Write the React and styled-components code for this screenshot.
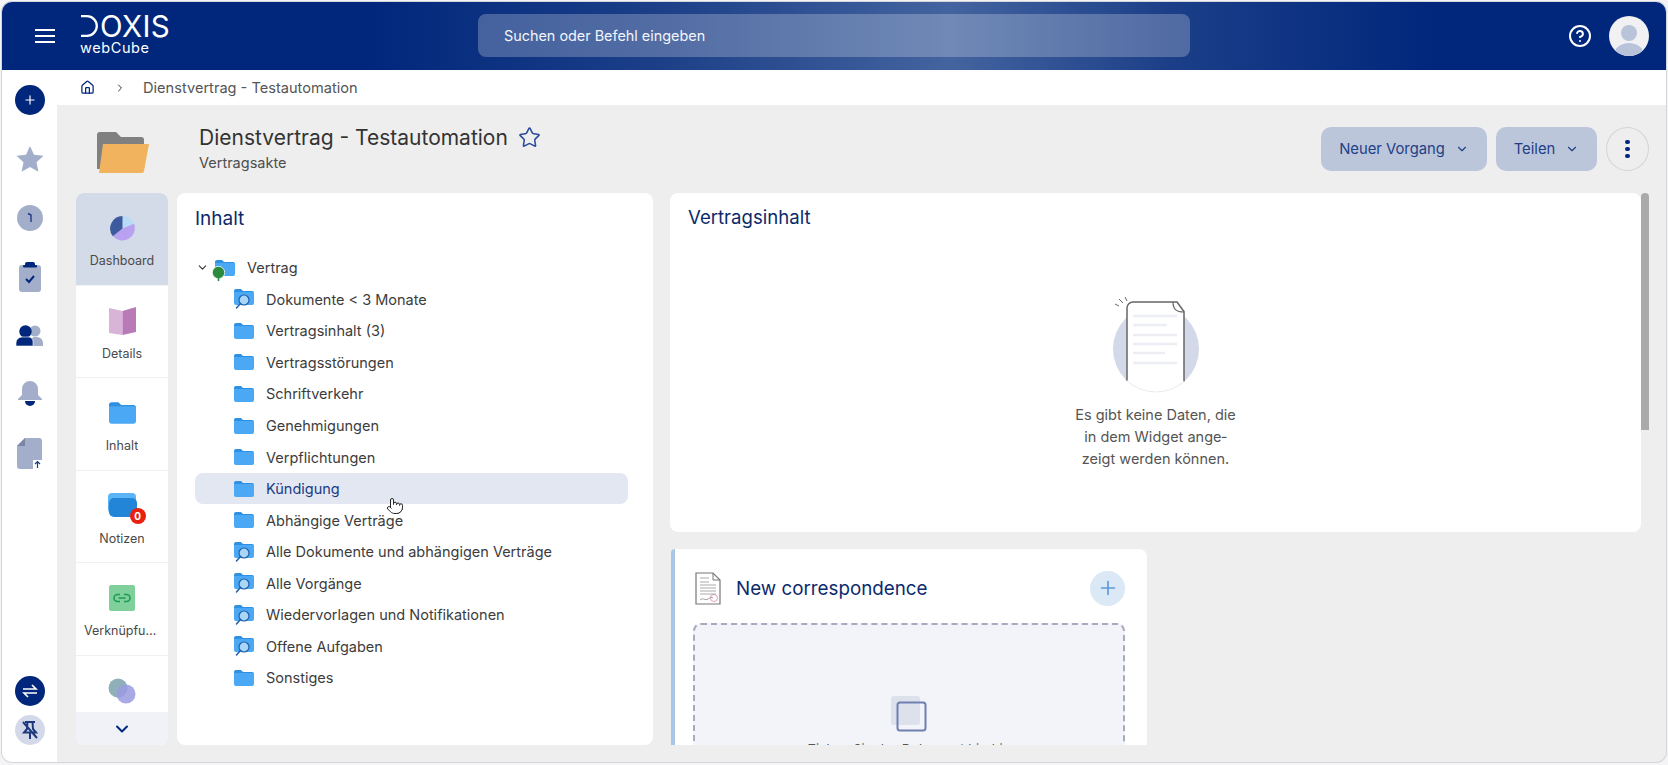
import React from 'react';
import styled, { createGlobalStyle } from 'styled-components';
import { ChevronDown, ChevronRight, Star, Plus, Home, HelpCircle, Pointer } from 'lucide-react';

const Global = createGlobalStyle`
  html, body { margin: 0; padding: 0; height: 100%; background: #f4f4f6; }
  body { font-family: Inter, "Noto Sans", "Liberation Sans", sans-serif; overflow: hidden; }
  #root { height: 100%; }
  * { box-sizing: border-box; }
`;

const Frame = styled.div`
  position: absolute; inset: 2px 2px 3px 2px;
  display: flex; flex-direction: column;
  border-radius: 10px; overflow: hidden;
  background: #eeeeee;
  box-shadow: 0 0 0 1px #d4d6dc;
`;
const Header = styled.header`
  height: 68px; flex: none;
  display: flex; align-items: center;
  padding: 0 17px 0 33px;
  background: linear-gradient(90deg, #00277c 0%, #00277c 22%, #1d4088 40%, #44649f 57%, #1c3f88 70%, #00277c 86%, #00277c 100%);
  color: #fff;
`;
const Burger = styled.svg`
  width: 20px; height: 14px; flex: none;
`;
const Logo = styled.div`
  margin-left: 25px; width: 398px; flex: none;
  display: flex; flex-direction: column;
  margin-top: -3px;
`;
const LogoMark = styled.div`
  display: flex; align-items: center; height: 24px;
  font-size: 29.5px; font-weight: 400; line-height: 24px; letter-spacing: 0.4px;
  svg { margin-right: 2px; }
`;
const LogoSub = styled.div`
  font-size: 14.5px; font-weight: 400; line-height: 16px; letter-spacing: 0.6px; margin-top: 2px;
`;
const Search = styled.div`
  width: 712px; height: 43px; flex: none; margin-top: -2px;
  display: flex; align-items: center; padding-left: 26px;
  border-radius: 8px;
  background: rgba(255,255,255,0.24);
  font-size: 14.4px; color: #f2f5fb;
`;
const HeaderRight = styled.div`
  margin-left: auto; display: flex; align-items: center; gap: 17px;
`;
const Avatar = styled.div`
  width: 40px; height: 40px; border-radius: 50%; overflow: hidden; flex: none; background: #f1f1f3;
  svg { display: block; }
`;
const Shell = styled.div`
  flex: 1; min-height: 0; display: flex;
`;
const Rail = styled.nav`
  width: 55px; flex: none; background: #fff;
  display: flex; flex-direction: column; align-items: center;
  padding-bottom: 17px;
`;
const RailItem = styled.div`
  height: 59px; width: 100%; flex: none;
  display: flex; align-items: center; justify-content: center;
`;
const RailBottom = styled.div`
  margin-top: auto; display: flex; flex-direction: column; gap: 9px;
`;
const Round = styled.div`
  width: ${p => p.$size || 30}px; height: ${p => p.$size || 30}px; border-radius: 50%;
  display: flex; align-items: center; justify-content: center;
  background: ${p => p.$bg || '#00277c'}; color: ${p => p.$color || '#fff'};
`;
const Main = styled.main`
  flex: 1; min-width: 0; display: flex; flex-direction: column;
`;
const Crumbs = styled.div`
  height: 35px; flex: none; background: #fff;
  display: flex; align-items: center; padding-left: 23px;
  font-size: 14.6px; color: #555;
`;
const CrumbSep = styled.span`
  display: flex; width: 48px; padding-left: 19px; color: #333;
`;
const TitleBar = styled.div`
  height: 88px; flex: none; display: flex; align-items: flex-start;
  padding: 22px 17px 0 40px;
`;
const BigFolder = styled.svg`
  width: 52px; height: 42px; flex: none; margin-top: 4px;
`;
const TitleBlock = styled.div`
  margin-left: 50px; display: flex; flex-direction: column;
`;
const TitleLine = styled.div`
  display: flex; align-items: center; gap: 10px; height: 24px;
  font-size: 21px; font-weight: 400; color: #333;
  margin-top: -2px;
`;
const Subtitle = styled.div`
  font-size: 14.5px; color: #4d4d4d; margin-top: 5px; line-height: 18px;
`;
const Actions = styled.div`
  margin-left: auto; display: flex; gap: 9px; align-items: center;
`;
const ActionBtn = styled.button`
  width: ${p => p.$w}px; height: 44px; border: 0; border-radius: 10px;
  background: #bcc6da; color: #1f3f86; font: inherit; font-size: 14.8px;
  display: flex; align-items: center; justify-content: center; gap: 10px;
`;
const Kebab = styled.button`
  width: 43px; height: 44px; border-radius: 50%; border: 1px solid #d4d4d4; background: transparent;
  display: flex; flex-direction: column; gap: 2.5px; align-items: center; justify-content: center; padding: 0;
  i { width: 4.5px; height: 4.5px; border-radius: 50%; background: #00277c; display: block; }
`;
const Body = styled.div`
  flex: 1; min-height: 0; display: flex; padding: 0 17px 17px 19px;
`;
const Tabs = styled.div`
  width: 92px; flex: none; display: flex; flex-direction: column; border-radius: 8px; overflow: hidden; background: #fff;
`;
const TabList = styled.div`
  flex: 1; min-height: 0; overflow: hidden;
`;
const Tab = styled.div`
  height: 92.5px; display: flex; flex-direction: column; align-items: center;
  padding-top: 19px;
  background: ${p => p.$active ? '#d3dae8' : '#fff'};
  border-bottom: 1px solid #f1f1f1;
  position: relative;
`;
const TabIcon = styled.div`
  height: 32px; display: flex; align-items: center; justify-content: center; position: relative;
`;
const TabLabel = styled.div`
  margin-top: 8px; font-size: 12.5px; color: #4a4a4a; line-height: 18px;
  max-width: 76px; white-space: nowrap; overflow: hidden; text-overflow: ellipsis;
`;
const Badge = styled.span`
  position: absolute; right: -9px; bottom: -2px; width: 16px; height: 16px; border-radius: 50%;
  background: #e8200f; color: #fff; font-size: 10px; font-weight: 700; display: flex; align-items: center; justify-content: center;
`;
const TabMore = styled.div`
  height: 33px; flex: none; background: #f0f2f8; display: flex; align-items: center; justify-content: center; color: #00277c;
`;
const Panel = styled.section`
  width: 476px; flex: none; margin-left: 9px; background: #fff; border-radius: 8px;
  padding: 14px 25px 0 18px; position: relative;
`;
const PanelTitle = styled.h2`
  margin: 0; font-size: 19px; font-weight: 400; color: #0b2a6b; line-height: 24px;
`;
const Tree = styled.div`
  margin-top: 21px;
`;
const Row = styled.div`
  height: 31.55px; display: flex; align-items: center; border-radius: 8px;
  padding-left: ${p => p.$root ? 1 : 39}px;
  background: ${p => p.$active ? '#e3e7f1' : 'transparent'};
  color: ${p => p.$active ? '#1a3a86' : '#3c3c3c'};
  font-size: 14.5px; white-space: nowrap;
`;
const RowText = styled.span`
  margin-left: 12px;
`;
const RootIcon = styled.span`
  position: relative; display: flex; margin-left: 6px;
`;
const PinMark = styled.svg`
  position: absolute; left: -3px; top: 6px;
`;
const Cursor = styled.div`
  position: absolute; left: 209px; top: 304px; color: #222;
`;
const Column = styled.div`
  width: 971px; flex: none; margin-left: 17px; display: flex; flex-direction: column; gap: 17px; overflow: hidden;
`;
const ContentCard = styled.section`
  height: 339px; flex: none; background: #fff; border-radius: 8px; padding: 12px 18px; display: flex; flex-direction: column; align-items: center;
`;
const CardTitle = styled.h2`
  align-self: flex-start; margin: 0; font-size: 18.6px; font-weight: 400; color: #0b2a6b; line-height: 24px;
`;
const EmptyArt = styled.svg`
  width: 100px; height: 100px; margin-top: 65px; flex: none; display: block;
`;
const EmptyText = styled.p`
  margin: 10px 0 0; font-size: 14.5px; line-height: 22px; color: #555; text-align: center; width: 165px;
`;
const Correspondence = styled.section`
  width: 476px; flex: none; height: 240px; margin-left: 1px; background: #fff; border-radius: 4px 8px 0 0;
  border-left: 4px solid #a9c6e8; padding: 21px 22px 0 20px;
`;
const CorrHead = styled.div`
  display: flex; align-items: center; height: 36px;
`;
const CorrTitle = styled.h3`
  margin: 0 0 0 15px; font-size: 18.8px; font-weight: 400; color: #0b2a6b; white-space: nowrap;
`;
const AddBtn = styled.div`
  margin-left: auto; width: 35px; height: 35px; border-radius: 50%; background: #dbe8f5; color: #5a9ad8;
  display: flex; align-items: center; justify-content: center;
`;
const Drop = styled.div`
  margin: 17px 0 0 -2px; height: 200px; border: 2px dashed #a9a9c0; border-radius: 8px; background: #f2f4f9;
  display: flex; flex-direction: column; align-items: center; padding-top: 71px;
`;
const DropIcon = styled.svg`
  width: 36px; height: 36px; flex: none;
`;
const DropText = styled.div`
  margin-top: 9px; font-size: 13px; color: #555;
`;
const Scrollbar = styled.div`
  width: 8px; flex: none; height: 237px; background: #aaaaaa; border-radius: 4px 4px 0 0;
`;

const Folder = () => (
  <svg width="20" height="16" viewBox="0 0 20 16">
    <path d="M0 2a2 2 0 0 1 2-2h5l2 2h9a2 2 0 0 1 2 2v2H0z" fill="#2f8fe0" />
    <path d="M0 3h20v11a2 2 0 0 1-2 2H2a2 2 0 0 1-2-2z" fill="#4aa8f5" />
  </svg>
);
const SearchFolder = () => (
  <svg width="20" height="20" viewBox="0 0 20 20">
    <path d="M0 2a2 2 0 0 1 2-2h5l2 2h9a2 2 0 0 1 2 2v2H0z" fill="#2f8fe0" />
    <path d="M0 3h20v11a2 2 0 0 1-2 2H2a2 2 0 0 1-2-2z" fill="#4aa8f5" />
    <circle cx="10" cy="11" r="5" fill="#a9d6f8" stroke="#1f5fa8" strokeWidth="1.2" />
    <path d="M6.5 14.5 2.5 19" stroke="#1f5fa8" strokeWidth="1.5" strokeLinecap="round" />
  </svg>
);

const items = [
  ['Dokumente < 3 Monate', 1], ['Vertragsinhalt (3)', 0], ['Vertragsstörungen', 0], ['Schriftverkehr', 0],
  ['Genehmigungen', 0], ['Verpflichtungen', 0], ['Kündigung', 0], ['Abhängige Verträge', 0],
  ['Alle Dokumente und abhängigen Verträge', 1], ['Alle Vorgänge', 1], ['Wiedervorlagen und Notifikationen', 1],
  ['Offene Aufgaben', 1], ['Sonstiges', 0],
];

export default function App() {
  return (
    <>
      <Global />
      <Frame>
        <Header>
          <Burger viewBox="0 0 20 14"><path d="M0 1h20M0 7h20M0 13h20" stroke="#fff" strokeWidth="2" /></Burger>
          <Logo>
            <LogoMark>
              <svg width="18" height="22" viewBox="0 0 18 22"><path d="M1 1.2h6a9.8 9.8 0 0 1 0 19.6H1" fill="none" stroke="#fff" strokeWidth="2.3" /></svg>
              OXIS
            </LogoMark>
            <LogoSub>webCube</LogoSub>
          </Logo>
          <Search>Suchen oder Befehl eingeben</Search>
          <HeaderRight>
            <HelpCircle size={24} color="#fff" strokeWidth={2} />
            <Avatar>
              <svg width="40" height="40" viewBox="0 0 40 40">
                <circle cx="20" cy="17" r="8" fill="#b9c3da" />
                <ellipse cx="20" cy="39" rx="15" ry="12" fill="#b9c3da" />
              </svg>
            </Avatar>
          </HeaderRight>
        </Header>
        <Shell>
          <Rail>
            <RailItem><Round><Plus size={14} strokeWidth={2} /></Round></RailItem>
            <RailItem>
              <svg width="30" height="30" viewBox="0 0 24 24"><path d="M12 1.5l3.2 7 7.6.9-5.6 5.2 1.5 7.5L12 18.3l-6.7 3.8 1.5-7.5L1.2 9.4l7.6-.9z" fill="#a3aeca" /></svg>
            </RailItem>
            <RailItem>
              <Round $size={26} $bg="#a3aeca" $color="#00277c">
                <svg width="10" height="14" viewBox="0 0 10 14"><path d="M3 2.5 6 4v7" fill="none" stroke="#1d3a80" strokeWidth="1.4" /></svg>
              </Round>
            </RailItem>
            <RailItem>
              <svg width="24" height="32" viewBox="0 0 24 32">
                <rect x="1" y="4" width="22" height="27" rx="3" fill="#a3aeca" />
                <path d="M7 6V3a2 2 0 0 1 2-2h6a2 2 0 0 1 2 2v3z" fill="#00277c" />
                <rect x="5" y="4" width="14" height="2.5" fill="#00277c" rx="1" />
                <path d="M8 18l3 3 5-6" fill="none" stroke="#00277c" strokeWidth="2" />
              </svg>
            </RailItem>
            <RailItem>
              <svg width="28" height="22" viewBox="0 0 28 22">
                <circle cx="19" cy="6" r="5.5" fill="#a3aeca" />
                <path d="M14 21v-4a5 5 0 0 1 5-5h2a6 6 0 0 1 6 6v3z" fill="#a3aeca" />
                <circle cx="9.5" cy="6.5" r="6.2" fill="#00277c" />
                <path d="M0 21v-3a6 6 0 0 1 6-6h7a5 5 0 0 1 4 5v4z" fill="#00277c" stroke="#fff" strokeWidth="0.6" />
              </svg>
            </RailItem>
            <RailItem>
              <svg width="24" height="30" viewBox="0 0 24 30">
                <path d="M12 1a8 8 0 0 0-8 8v6l-4 4v1h24v-1l-4-4V9a8 8 0 0 0-8-8z" fill="#a3aeca" />
                <path d="M7 21h10a5 5 0 0 1-10 0z" fill="#00277c" />
              </svg>
            </RailItem>
            <RailItem>
              <svg width="25" height="31" viewBox="0 0 25 31">
                <path d="M8 0h14a3 3 0 0 1 3 3v25a3 3 0 0 1-3 3H3a3 3 0 0 1-3-3V8z" fill="#a3aeca" />
                <path d="M8 0v8H0z" fill="#7a86a6" />
                <rect x="16" y="22" width="9" height="9" fill="#fff" />
                <path d="M20.5 30v-6M18 26l2.5-2.5L23 26" stroke="#1d3a80" strokeWidth="1.2" fill="none" />
              </svg>
            </RailItem>
            <RailBottom>
              <Round>
                <svg width="16" height="14" viewBox="0 0 16 14"><path d="M1 5h13l-4-4M15 9H2l4 4" fill="none" stroke="#fff" strokeWidth="1.7" /></svg>
              </Round>
              <Round $bg="#d3d9e8">
                <svg width="18" height="20" viewBox="0 0 18 20">
                  <path d="M4 2h10M6.5 2 6 9l-3 3.5h12L12 9l-.5-7M9 12.5V19M2 2l14 16" fill="none" stroke="#1d3a80" strokeWidth="2" />
                </svg>
              </Round>
            </RailBottom>
          </Rail>
          <Main>
            <Crumbs>
              <Home size={15} color="#00277c" strokeWidth={2} />
              <CrumbSep><ChevronRight size={12} /></CrumbSep>
              Dienstvertrag - Testautomation
            </Crumbs>
            <TitleBar>
              <BigFolder viewBox="0 0 52 42">
                <path d="M0 4a3 3 0 0 1 3-3h16l5 5h21a3 3 0 0 1 2 2v30H0z" fill="#808080" />
                <path d="M6 13h46l-5 27a2 2 0 0 1-2 2H2z" fill="#f2b35f" />
              </BigFolder>
              <TitleBlock>
                <TitleLine>
                  Dienstvertrag - Testautomation
                  <Star size={23} color="#2a4a9a" strokeWidth={1.6} />
                </TitleLine>
                <Subtitle>Vertragsakte</Subtitle>
              </TitleBlock>
              <Actions>
                <ActionBtn $w={166}>Neuer Vorgang <ChevronDown size={14} /></ActionBtn>
                <ActionBtn $w={101}>Teilen <ChevronDown size={14} /></ActionBtn>
                <Kebab aria-label="Mehr"><i /><i /><i /></Kebab>
              </Actions>
            </TitleBar>
            <Body>
              <Tabs>
                <TabList>
                  <Tab $active>
                    <TabIcon>
                      <svg width="27" height="27" viewBox="0 0 28 28">
                        <path d="M14 14V1a13 13 0 0 1 12 8z" fill="#b8dcf8" />
                        <path d="M14 14l12-5a13 13 0 0 1-22 13z" fill="#b9a0f0" />
                        <path d="M14 14V1A13 13 0 0 0 4 22z" fill="#3d5a9e" />
                      </svg>
                    </TabIcon>
                    <TabLabel>Dashboard</TabLabel>
                  </Tab>
                  <Tab>
                    <TabIcon>
                      <svg width="27" height="28" viewBox="0 0 27 28">
                        <path d="M0 1l13.5 3v24L0 26z" fill="#d8b4d8" />
                        <path d="M27 0l-13.5 4v24L27 25z" fill="#b87bb8" />
                      </svg>
                    </TabIcon>
                    <TabLabel>Details</TabLabel>
                  </Tab>
                  <Tab>
                    <TabIcon>
                      <svg width="27" height="22" viewBox="0 0 20 16">
                        <path d="M0 2a2 2 0 0 1 2-2h5l2 2h9a2 2 0 0 1 2 2v2H0z" fill="#2f8fe0" />
                        <path d="M0 3h20v11a2 2 0 0 1-2 2H2a2 2 0 0 1-2-2z" fill="#4aa8f5" />
                      </svg>
                    </TabIcon>
                    <TabLabel>Inhalt</TabLabel>
                  </Tab>
                  <Tab>
                    <TabIcon>
                      <svg width="29" height="26" viewBox="0 0 29 26">
                        <rect x="0" y="0" width="28" height="20" rx="4" fill="#5ab4f5" />
                        <rect x="1" y="5" width="28" height="19" rx="5" fill="#2285d8" />
                      </svg>
                      <Badge>0</Badge>
                    </TabIcon>
                    <TabLabel>Notizen</TabLabel>
                  </Tab>
                  <Tab>
                    <TabIcon>
                      <svg width="26" height="26" viewBox="0 0 26 26">
                        <rect width="26" height="26" rx="2" fill="#7fd09a" />
                        <path d="M11 9.5H8.5a3.5 3.5 0 0 0 0 7H11M15 9.5h2.5a3.5 3.5 0 0 1 0 7H15M9.5 13h7" fill="none" stroke="#1f9a55" strokeWidth="1.6" />
                      </svg>
                    </TabIcon>
                    <TabLabel>Verknüpfungen</TabLabel>
                  </Tab>
                  <Tab>
                    <TabIcon>
                      <svg width="28" height="26" viewBox="0 0 28 26">
                        <circle cx="10" cy="10" r="9.5" fill="#8fb0b8" />
                        <circle cx="18" cy="16" r="9.5" fill="#9a9ae0" fillOpacity="0.85" />
                      </svg>
                    </TabIcon>
                  </Tab>
                </TabList>
                <TabMore><ChevronDown size={20} strokeWidth={2.4} /></TabMore>
              </Tabs>
              <Panel>
                <PanelTitle>Inhalt</PanelTitle>
                <Tree>
                  <Row $root>
                    <ChevronDown size={13} color="#333" strokeWidth={2} />
                    <RootIcon>
                      <Folder />
                      <PinMark width="13" height="15" viewBox="0 0 13 15">
                        <circle cx="6.5" cy="6.5" r="6.2" fill="#2b8a3e" stroke="#fff" strokeWidth="0.8" />
                        <path d="M6.5 11v4" stroke="#2b8a3e" strokeWidth="1.6" />
                      </PinMark>
                    </RootIcon>
                    <RowText>Vertrag</RowText>
                  </Row>
                  {items.map(([label, search]) => (
                    <Row key={label} $active={label === 'Kündigung'}>
                      {search ? <SearchFolder /> : <Folder />}
                      <RowText>{label}</RowText>
                    </Row>
                  ))}
                </Tree>
                <Cursor><Pointer size={18} fill="#fff" strokeWidth={1.3} /></Cursor>
              </Panel>
              <Column>
                <ContentCard>
                  <CardTitle>Vertragsinhalt</CardTitle>
                  <EmptyArt viewBox="0 0 100 100">
                    <circle cx="50" cy="55" r="43" fill="#d3d9e8" />
                    <path d="M21 86.7V14a6 6 0 0 1 6-6h44l7 9v70.6A43 43 0 0 1 21 86.7z" fill="#fff" />
                    <path d="M21 86.7V14a6 6 0 0 1 6-6h44c3 4 5 7 7 9.5v70" fill="none" stroke="#666" strokeWidth="1.5" />
                    <path d="M21 86.7A43 43 0 0 0 78 87.6" fill="none" stroke="#e6e8ee" strokeWidth="0.8" />
                    <path d="M67 8c0 7 3 10 11 10" fill="none" stroke="#666" strokeWidth="1.2" />
                    <path d="M27 22h44M27 31h34M27 41h44M27 50h44M27 59h32M27 69h44" stroke="#eceef3" strokeWidth="2.5" />
                    <path d="M19 3l2 4M13 5l4 4M9 10l4 2" stroke="#666" strokeWidth="1" />
                  </EmptyArt>
                  <EmptyText>Es gibt keine Daten, die in dem Widget ange&shy;zeigt werden können.</EmptyText>
                </ContentCard>
                <Correspondence>
                  <CorrHead>
                    <svg width="26" height="33" viewBox="0 0 26 33">
                      <path d="M1 1h17l7 7v24H1z" fill="#fff" stroke="#777" strokeWidth="1.2" />
                      <path d="M18 1v7h7" fill="none" stroke="#777" strokeWidth="1" />
                      <path d="M5 6h9M5 10h9M5 13h16M5 16h16M5 19h16M5 22h16" stroke="#aaa" strokeWidth="1" />
                      <path d="M5 28c3-3 5 1 8-1s3-2 5-1" fill="none" stroke="#888" strokeWidth="0.8" />
                      <circle cx="19" cy="26" r="3.5" fill="none" stroke="#d98aa0" strokeWidth="0.8" />
                    </svg>
                    <CorrTitle>New correspondence</CorrTitle>
                    <AddBtn><Plus size={22} strokeWidth={1.8} /></AddBtn>
                  </CorrHead>
                  <Drop>
                    <DropIcon viewBox="0 0 36 36">
                      <rect x="0" y="0" width="29" height="29" rx="3" fill="#dde1ec" />
                      <rect x="6.5" y="6.5" width="28" height="28" rx="2.5" fill="none" stroke="#6f7fb0" strokeWidth="2" />
                    </DropIcon>
                    <DropText>Ziehen Sie das Dokument hierhin</DropText>
                  </Drop>
                </Correspondence>
              </Column>
              <Scrollbar />
            </Body>
          </Main>
        </Shell>
      </Frame>
    </>
  );
}
